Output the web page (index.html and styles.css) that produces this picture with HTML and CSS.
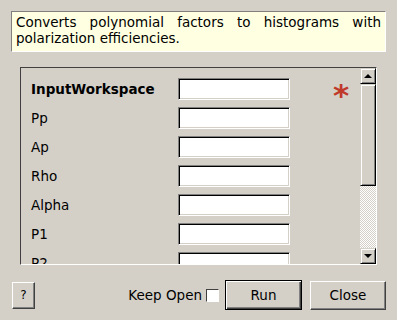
FILE: index.html
```html
<!DOCTYPE html>
<html lang="en">
<head>
    <meta charset="UTF-8">
    <title>PolarizationEfficienciesFromPolynomial</title>
    <link rel="stylesheet" href="styles.css">
</head>
<body>
    <div class="dialog">
        <div class="description">Converts polynomial factors to histograms with polarization efficiencies.</div>

        <div class="props">
            <div class="props-list">
                <div class="row">
                    <span class="label bold">InputWorkspace</span>
                    <input type="text" class="field">
                    <span class="required">*</span>
                </div>
                <div class="row"><span class="label">Pp</span><input type="text" class="field"></div>
                <div class="row"><span class="label">Ap</span><input type="text" class="field"></div>
                <div class="row"><span class="label">Rho</span><input type="text" class="field"></div>
                <div class="row"><span class="label">Alpha</span><input type="text" class="field"></div>
                <div class="row"><span class="label">P1</span><input type="text" class="field"></div>
                <div class="row"><span class="label">P2</span><input type="text" class="field"></div>
            </div>
            <div class="scrollbar">
                <div class="sb-btn"><span class="arrow up"></span></div>
                <div class="sb-thumb"></div>
                <div class="sb-track"></div>
                <div class="sb-btn"><span class="arrow down"></span></div>
            </div>
        </div>

        <div class="buttons">
            <button class="btn help">?</button>
            <span class="spacer"></span>
            <label class="keep-open">Keep Open <span class="check"></span></label>
            <button class="btn run">Run</button>
            <button class="btn close">Close</button>
        </div>
    </div>
</body>
</html>
```

FILE: styles.css
```css
body {
    margin: 0;
    background: #d4d0c8;
    font-family: "DejaVu Sans", sans-serif;
    font-size: 13.5px;
    color: #000;
}
.dialog {
    width: 397px;
    height: 320px;
    overflow: hidden;
}
.description {
    margin: 11px 11px 0 11px;
    height: 41px;
    padding: 2px 4px 0 4px;
    background: #ffffe1;
    border-top: 1px solid #808080;
    border-left: 1px solid #808080;
    border-bottom: 1px solid #fff;
    border-right: 1px solid #fff;
    text-align: justify;
    line-height: 16px;
    box-sizing: border-box;
}
.props {
    margin: 15px 0 0 20px;
    width: 357px;
    height: 198px;
    box-sizing: border-box;
    border-top: 1px solid #404040;
    border-left: 1px solid #404040;
    border-bottom: 1px solid #fff;
    border-right: 1px solid #fff;
    display: flex;
}
.props-list {
    flex: 1;
    overflow: hidden;
    padding: 10px 0 0 10px;
    display: flex;
    flex-direction: column;
    gap: 7px;
}
.row {
    display: flex;
    align-items: center;
    height: 22px;
    flex-shrink: 0;
}
.label {
    width: 147px;
}
.bold {
    font-weight: bold;
}
.field {
    width: 112px;
    height: 22px;
    box-sizing: border-box;
    margin: 0;
    padding: 0 2px;
    background: #fff;
    border: 1px solid;
    border-color: #808080 #fff #fff #808080;
    box-shadow: inset 1px 1px #000, inset -1px -1px #d4d0c8;
}
.required {
    margin-left: 43px;
    color: #c0392b;
    font-size: 31px;
    font-weight: bold;
    line-height: 22px;
    padding-top: 12px;
}
.scrollbar {
    width: 16px;
    display: flex;
    flex-direction: column;
}
.sb-btn, .sb-thumb {
    box-sizing: border-box;
    background: #d4d0c8;
    border-top: 1px solid #d4d0c8;
    border-left: 1px solid #d4d0c8;
    border-right: 1px solid #000;
    border-bottom: 1px solid #000;
    box-shadow: inset 1px 1px #fff, inset -1px -1px #808080;
}
.sb-btn {
    height: 16px;
    display: flex;
    align-items: center;
    justify-content: center;
}
.sb-thumb {
    height: 102px;
}
.sb-track {
    flex: 1;
    background: repeating-conic-gradient(#fff 0 25%, #d4d0c8 0 50%) 0 0 / 2px 2px;
}
.arrow {
    width: 0;
    height: 0;
    border-left: 4px solid transparent;
    border-right: 4px solid transparent;
}
.arrow.up {
    border-bottom: 4px solid #000;
}
.arrow.down {
    border-top: 4px solid #000;
}
.buttons {
    display: flex;
    align-items: center;
    margin-top: 15px;
    padding: 0 11px 0 12px;
    height: 30px;
}
.spacer {
    flex: 1;
}
.btn {
    font-family: "DejaVu Sans", sans-serif;
    font-size: 13.5px;
    color: #000;
    background: #d4d0c8;
    margin: 0;
    padding: 0;
    box-sizing: border-box;
    border: 1px solid;
    border-color: #fff #404040 #404040 #fff;
    box-shadow: inset -1px -1px #808080;
}
.help {
    width: 23px;
    height: 27px;
    font-size: 12px;
}
.keep-open {
    display: flex;
    align-items: center;
    gap: 4px;
    margin-right: 6px;
}
.check {
    width: 13px;
    height: 13px;
    box-sizing: border-box;
    background: #fff;
    border: 1px solid;
    border-color: #404040 #fff #fff #404040;
}
.run {
    width: 77px;
    height: 30px;
    border: 1px solid #000;
    box-shadow: inset 1px 1px #fff, inset -1px -1px #404040, inset -2px -2px #808080;
}
.close {
    width: 76px;
    height: 29px;
    margin-left: 8px;
}
```
